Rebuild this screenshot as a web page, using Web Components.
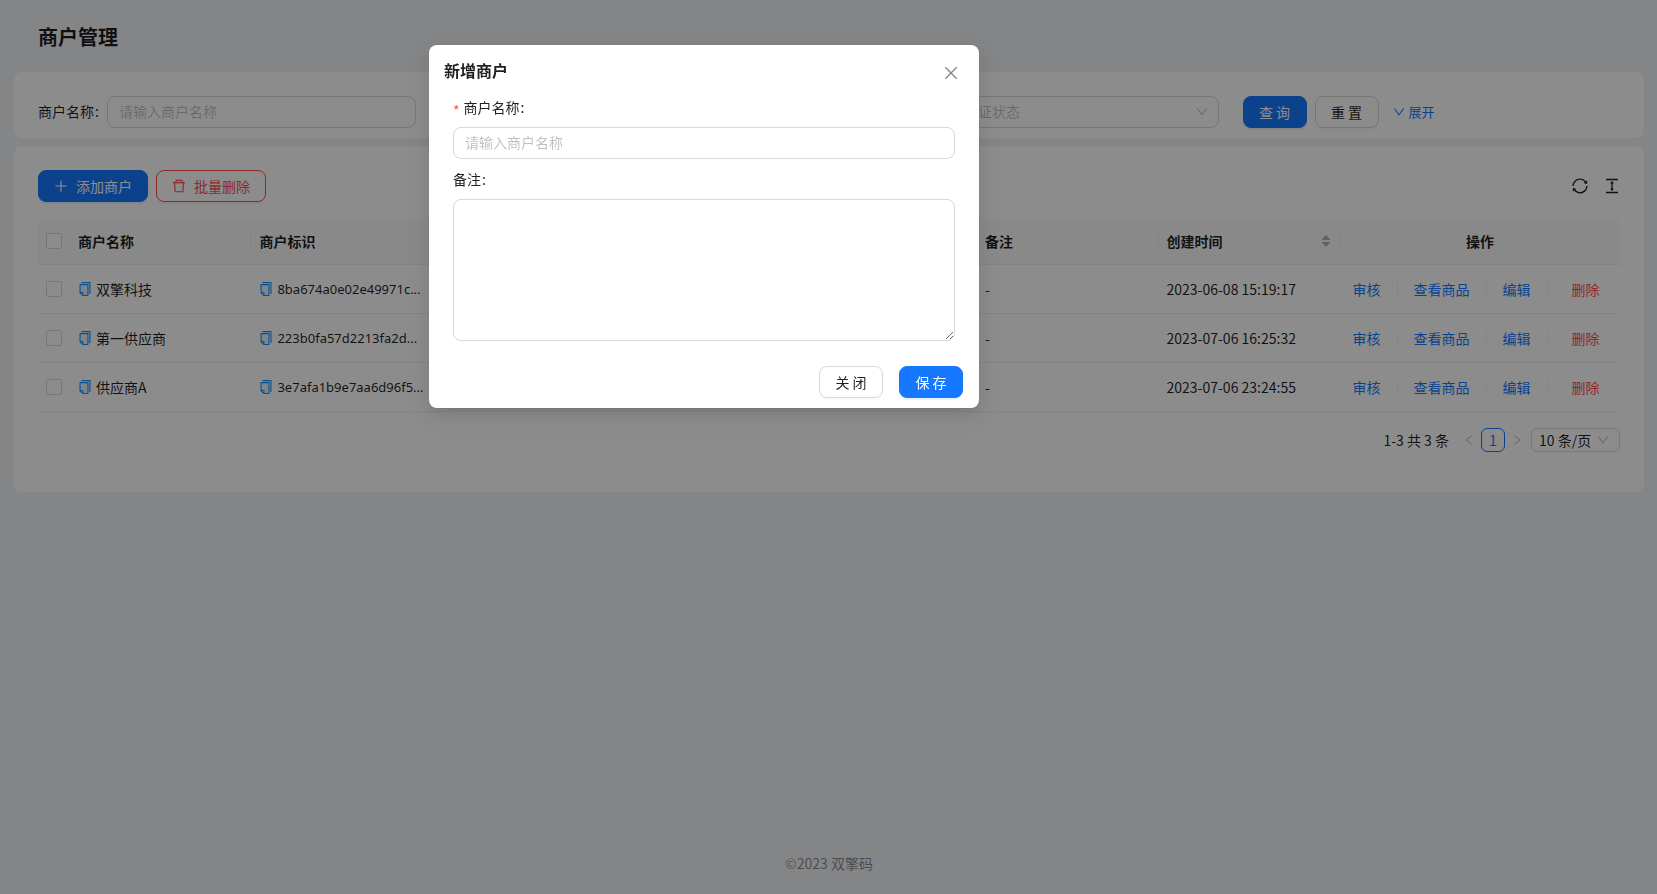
<!DOCTYPE html>
<html lang="zh-CN">
<head>
<meta charset="utf-8">
<title>商户管理</title>
<style>
  body {
    margin: 0;
    font: 14px/22px "Noto Sans CJK SC", sans-serif;
    color: rgba(0, 0, 0, .88);
    background: #f0f2f5;
  }
</style>
</head>
<body>
<merchant-page></merchant-page>

<script>
const ICONS = {
  plus: '<path d="M482 152h60q8 0 8 8v704q0 8-8 8h-60q-8 0-8-8V160q0-8 8-8Z"/><path d="M192 474h672q8 0 8 8v60q0 8-8 8H160q-8 0-8-8v-60q0-8 8-8Z"/>',
  trash: '<path d="M360 184h-8c4.400 0 8-3.600 8-8v8h304v-8c0 4.400 3.600 8 8 8h-8v72h72v-80c0-35.300-28.700-64-64-64H352c-35.300 0-64 28.700-64 64v80h72v-72zm504 72H160c-17.700 0-32 14.300-32 32v32c0 4.400 3.600 8 8 8h60.400l24.700 523c1.600 34.100 29.800 61 63.900 61h454c34.200 0 62.300-26.800 63.900-61l24.700-523H888c4.400 0 8-3.600 8-8v-32c0-17.700-14.300-32-32-32zM731.300 840H292.700l-24.200-512h487l-24.200 512z"/>',
  down: '<path d="M884 256h-75c-5.100 0-9.900 2.500-12.900 6.600L512 654.200 227.900 262.600c-3-4.100-7.800-6.600-12.900-6.600h-75c-6.500 0-10.300 7.400-6.500 12.700l352.600 486.100c12.800 17.600 39 17.600 51.700 0l352.600-486.100c3.900-5.300.1-12.700-6.400-12.700z"/>',
  left: '<path d="M724 218.300V141c0-6.700-7.700-10.400-12.900-6.300L260.300 486.800a31.860 31.860 0 000 50.300l450.800 352.100c5.300 4.100 12.900.4 12.900-6.300v-77.300c0-4.900-2.300-9.600-6.100-12.600l-360-281 360-281.100c3.800-3 6.100-7.700 6.100-12.600z"/>',
  right: '<path d="M765.700 486.800L314.900 134.700A7.970 7.970 0 00302 141v77.300c0 4.900 2.300 9.600 6.100 12.600l360 281.100-360 281.100c-3.900 3-6.100 7.700-6.100 12.600V883c0 6.700 7.700 10.400 12.900 6.300l450.800-352.100a31.960 31.960 0 000-50.400z"/>',
  reload: '<path d="M168 504.200c1-43.700 10-86.100 26.900-126 17.300-41 42.100-77.700 73.700-109.400S337 212.300 378 195c42.400-17.900 87.400-27 133.900-27s91.500 9.100 133.800 27A341.500 341.500 0 01755 268.800c9.900 9.900 19.200 20.400 27.800 31.400l-60.200 47a8 8 0 003 14.100l175.700 43c5 1.200 9.900-2.600 9.900-7.700l.8-180.900c0-6.700-7.700-10.500-12.900-6.300l-56.400 44.100C765.800 155.100 646.200 92 511.800 92 282.700 92 96.300 275.600 92 503.800a8 8 0 008 8.200h60c4.400 0 7.900-3.500 8-7.800zm756 7.800h-60c-4.400 0-7.900 3.500-8 7.800-1 43.700-10 86.100-26.900 126-17.300 41-42.100 77.800-73.700 109.400A342.450 342.450 0 01512.100 856a342.240 342.240 0 01-243.200-100.800c-9.900-9.900-19.200-20.400-27.800-31.400l60.200-47a8 8 0 00-3-14.100l-175.700-43c-5-1.200-9.900 2.600-9.900 7.700l-.7 181c0 6.700 7.700 10.500 12.900 6.300l56.400-44.100C258.200 868.900 377.800 932 512.200 932c229.200 0 415.500-183.700 419.800-411.800a8 8 0 00-8-8.200z"/>',
  height: '<path d="M840 836H184c-4.400 0-8 3.600-8 8v60c0 4.400 3.600 8 8 8h656c4.400 0 8-3.600 8-8v-60c0-4.400-3.600-8-8-8zm0-724H184c-4.400 0-8 3.600-8 8v60c0 4.400 3.600 8 8 8h656c4.400 0 8-3.600 8-8v-60c0-4.400-3.600-8-8-8zM610.800 378c6 0 9.400-7 5.700-11.700L515.700 238.700a7.140 7.140 0 00-11.300 0L403.600 366.300a7.230 7.230 0 005.700 11.700H476v268h-62.800c-6 0-9.400 7-5.700 11.700l100.800 127.500c2.900 3.700 8.500 3.700 11.300 0l100.800-127.500c3.700-4.700.4-11.700-5.700-11.700H548V378h62.800z"/>',
  close: '<path d="M799.860 166.310c.02 0 .04.02.08.06l57.690 57.700c.04.03.05.05.06.08a.12.12 0 010 .06c0 .03-.02.05-.06.09L569.930 512l287.700 287.700c.04.04.05.06.06.09a.12.12 0 010 .07c0 .02-.02.04-.06.08l-57.700 57.690c-.03.04-.05.05-.07.06a.12.12 0 01-.07 0c-.03 0-.05-.02-.09-.06L512 569.930l-287.700 287.700c-.04.04-.06.05-.09.06a.12.12 0 01-.07 0c-.02 0-.04-.02-.08-.06l-57.690-57.700c-.04-.03-.05-.05-.06-.07a.12.12 0 010-.07c0-.03.02-.05.06-.09L454.070 512l-287.700-287.700c-.04-.04-.05-.06-.06-.09a.12.12 0 010-.07c0-.02.02-.04.06-.08l57.700-57.690c.03-.04.05-.05.07-.06a.12.12 0 01.07 0c.03 0 .05.02.09.06L512 454.070l287.700-287.700c.04-.04.06-.05.09-.06a.12.12 0 01.07 0z"/>',
  copy: '<path fill="#e6f4ff" d="M232 706h142c22.100 0 40 17.900 40 40v142h250V264H232v442z"/><path d="M832 64H296c-4.400 0-8 3.600-8 8v56c0 4.400 3.600 8 8 8h496v688c0 4.400 3.600 8 8 8h56c4.400 0 8-3.600 8-8V96c0-17.700-14.300-32-32-32z"/><path d="M704 192H192c-17.700 0-32 14.300-32 32v530.700c0 8.500 3.400 16.600 9.400 22.600l173.300 173.300c2.200 2.200 4.700 4 7.400 5.500v1.900h4.200c3.500 1.300 7.200 2 11 2H704c17.700 0 32-14.300 32-32V224c0-17.700-14.300-32-32-32zM350 856.200L263.900 770H350v86.200zM664 888H414V746c0-22.100-17.900-40-40-40H232V264h432v624z"/>',
  sorter: '<path d="M512 64 176 437h672z"/><path d="M512 960 176 587h672z"/>'
};

class UiIcon extends HTMLElement {
  constructor() {
    super();
    this.attachShadow({ mode: 'open' });
  }
  connectedCallback() {
    this.shadowRoot.innerHTML = `
      <style>
        :host { display: inline-flex; flex: none; width: 14px; height: 14px; }
        svg { width: 100%; height: 100%; fill: currentColor; }
      </style>
      <svg viewBox="64 64 896 896" aria-hidden="true">${ICONS[this.getAttribute('name')]}</svg>`;
  }
}
customElements.define('ui-icon', UiIcon);

class UiButton extends HTMLElement {
  constructor() {
    super();
    this.attachShadow({ mode: 'open' }).innerHTML = `
      <style>
        :host { display: inline-flex; }
        button {
          display: inline-flex; align-items: center; justify-content: center; gap: 8px;
          box-sizing: border-box; height: 32px; min-width: 64px; padding: 0 15px;
          font: inherit; color: inherit; white-space: nowrap; cursor: pointer;
          background: #fff; border: 1px solid #d9d9d9; border-radius: 8px;
          box-shadow: 0 2px 0 rgba(0, 0, 0, .02);
        }
        :host([kind="primary"]) button {
          color: #fff; background: #1677ff; border-color: #1677ff;
          box-shadow: 0 2px 0 rgba(5, 145, 255, .1);
        }
        :host([kind="danger"]) button {
          color: #ff4d4f; border-color: #ff4d4f;
          box-shadow: 0 2px 0 rgba(255, 38, 5, .06);
        }
      </style>
      <button type="button"><slot></slot></button>`;
  }
}
customElements.define('ui-button', UiButton);

class PageCard extends HTMLElement {
  constructor() {
    super();
    this.attachShadow({ mode: 'open' }).innerHTML = `
      <style>
        :host { display: block; padding: 24px; background: #fff; border-radius: 8px; }
      </style>
      <slot></slot>`;
  }
}
customElements.define('page-card', PageCard);

class QueryFilter extends HTMLElement {
  constructor() {
    super();
    this.attachShadow({ mode: 'open' }).innerHTML = `
      <style>
        :host { display: block; }
        form { display: grid; grid-template-columns: repeat(4, minmax(0, 1fr)); column-gap: 24px; }
        .field, .actions { display: flex; align-items: center; gap: 8px; height: 32px; }
        label { white-space: nowrap; padding-bottom: 2px; }
        label::after { content: ":"; margin-left: 1px; }
        .box { position: relative; display: flex; flex: 1; min-width: 0; }
        input, select {
          flex: 1; min-width: 0; box-sizing: border-box; height: 32px; padding: 0 11px 2px;
          font: inherit; background: #fff; border: 1px solid #d9d9d9; border-radius: 8px;
          appearance: none; outline: none;
        }
        select, input::placeholder { color: rgba(0, 0, 0, .25); opacity: 1; }
        .box ui-icon {
          position: absolute; right: 11px; top: 10px; width: 12px; height: 12px;
          color: rgba(0, 0, 0, .25); pointer-events: none;
        }
        a {
          display: inline-flex; align-items: center; gap: 4px; margin-left: 6px;
          color: #1677ff; text-decoration: none; font-size: 13px;
        }
        a ui-icon { width: 12px; height: 12px; }
      </style>
      <form>
        <div class="field"><label for="name">商户名称</label><div class="box"><input id="name" placeholder="请输入商户名称"></div></div>
        <div class="field"><div class="box"><input aria-label="商户标识"></div></div>
        <div class="field"><label for="state">认证状态</label><div class="box">
          <select id="state"><option>请选择认证状态</option></select><ui-icon name="down"></ui-icon></div></div>
        <div class="actions">
          <ui-button kind="primary">查 询</ui-button>
          <ui-button>重 置</ui-button>
          <a href="#"><ui-icon name="down"></ui-icon>展开</a>
        </div>
      </form>`;
  }
}
customElements.define('query-filter', QueryFilter);

class TableToolbar extends HTMLElement {
  constructor() {
    super();
    this.attachShadow({ mode: 'open' }).innerHTML = `
      <style>
        :host { display: flex; align-items: center; gap: 8px; margin-bottom: 16px; }
        .tools { display: flex; gap: 16px; margin-left: auto; }
        .tools button { display: flex; padding: 0; border: 0; background: none; color: inherit; cursor: pointer; }
        .tools ui-icon { width: 16px; height: 16px; }
      </style>
      <ui-button kind="primary"><ui-icon name="plus"></ui-icon>添加商户</ui-button>
      <ui-button kind="danger"><ui-icon name="trash"></ui-icon>批量删除</ui-button>
      <div class="tools">
        <button type="button" aria-label="刷新"><ui-icon name="reload"></ui-icon></button>
        <button type="button" aria-label="密度"><ui-icon name="height"></ui-icon></button>
      </div>`;
  }
}
customElements.define('table-toolbar', TableToolbar);

const MERCHANTS = [
  { name: '双擎科技', code: '8ba674a0e02e49971c...', created: '2023-06-08 15:19:17' },
  { name: '第一供应商', code: '223b0fa57d2213fa2d...', created: '2023-07-06 16:25:32' },
  { name: '供应商A', code: '3e7afa1b9e7aa6d96f5...', created: '2023-07-06 23:24:55' }
];

class MerchantTable extends HTMLElement {
  constructor() {
    super();
    this.attachShadow({ mode: 'open' });
  }
  connectedCallback() {
    const rows = MERCHANTS.map(m => `
      <tr>
        <td class="check"><input type="checkbox" aria-label="选择${m.name}"></td>
        <td><span class="copy"><ui-icon name="copy"></ui-icon>${m.name}</span></td>
        <td><span class="copy code"><ui-icon name="copy"></ui-icon>${m.code}</span></td>
        <td></td><td></td><td></td><td>-</td>
        <td>${m.created}</td>
        <td><div class="ops">
          <a href="#">审核</a><i></i><a href="#">查看商品</a><i></i><a href="#">编辑</a><i></i><a class="del" href="#">删除</a>
        </div></td>
      </tr>`).join('');
    this.shadowRoot.innerHTML = `
      <style>
        :host { display: block; }
        table { width: 100%; table-layout: fixed; border-collapse: separate; border-spacing: 0; }
        th, td {
          box-sizing: border-box; height: 49px; padding: 0 8px; text-align: left;
          white-space: nowrap; border-bottom: 1px solid #f0f0f0;
        }
        th { position: relative; height: 47px; font-weight: 600; background: #fafafa; }
        th:not(.check), td:not(.check) { padding-bottom: 1px; }
        th:first-child { border-top-left-radius: 8px; }
        th:last-child { border-top-right-radius: 8px; text-align: center; }
        th.line::after {
          content: ""; position: absolute; right: 0; top: 12px; width: 1px; height: 22px; background: #f0f0f0;
        }
        .check { width: 32px; }
        .ops-col { width: 280px; }
        .sort { display: flex; align-items: center; justify-content: space-between; }
        .sort ui-icon { width: 12px; height: 12px; color: rgba(0, 0, 0, .29); }
        input {
          display: block; appearance: none; box-sizing: border-box; width: 16px; height: 16px; margin: 0;
          background: #fff; border: 1px solid #d9d9d9; border-radius: 2px;
        }
        .copy { display: flex; align-items: center; gap: 4px; }
        .code { font-family: "Noto Sans", sans-serif; font-size: 13px; }
        .copy ui-icon { color: #1890ff; }
        .ops { display: flex; align-items: center; justify-content: center; gap: 16px; }
        .ops i { width: 1px; height: 13px; background: rgba(5, 5, 5, .06); }
        a { color: #1677ff; text-decoration: none; }
        a.del { padding: 0 8px; color: #ff4d4f; }
      </style>
      <table>
        <thead><tr>
          <th class="check"><input type="checkbox" aria-label="全选"></th>
          <th class="line">商户名称</th>
          <th class="line">商户标识</th>
          <th class="line"></th>
          <th class="line"></th>
          <th class="line"></th>
          <th class="line">备注</th>
          <th class="line"><div class="sort">创建时间<ui-icon name="sorter"></ui-icon></div></th>
          <th class="ops-col">操作</th>
        </tr></thead>
        <tbody>${rows}</tbody>
      </table>`;
  }
}
customElements.define('merchant-table', MerchantTable);

class TablePager extends HTMLElement {
  constructor() {
    super();
    this.attachShadow({ mode: 'open' }).innerHTML = `
      <style>
        :host { display: flex; align-items: center; justify-content: flex-end; margin: 16px 0; height: 24px; }
        .total { margin-right: 8px; }
        button {
          display: flex; align-items: center; justify-content: center; box-sizing: border-box;
          width: 24px; height: 24px; padding: 0; font: inherit; background: none;
          border: 0; color: rgba(0, 0, 0, .25);
        }
        button ui-icon { width: 12px; height: 12px; }
        .current { background: #fff; border: 1px solid #1677ff; border-radius: 6px; color: #1677ff; }
        .size { position: relative; display: flex; margin-left: 2px; }
        select {
          box-sizing: border-box; width: 89px; height: 24px; padding: 0 7px; font: inherit; color: inherit;
          background: #fff; border: 1px solid #d9d9d9; border-radius: 6px; appearance: none;
        }
        .size ui-icon {
          position: absolute; right: 11px; top: 6px; width: 12px; height: 12px;
          color: rgba(0, 0, 0, .25); pointer-events: none;
        }
      </style>
      <span class="total">1-3 共 3 条</span>
      <button type="button" aria-label="上一页"><ui-icon name="left"></ui-icon></button>
      <button type="button" class="current">1</button>
      <button type="button" aria-label="下一页"><ui-icon name="right"></ui-icon></button>
      <div class="size"><select aria-label="每页条数"><option>10 条/页</option></select><ui-icon name="down"></ui-icon></div>`;
  }
}
customElements.define('table-pager', TablePager);

class MerchantDialog extends HTMLElement {
  constructor() {
    super();
    this.attachShadow({ mode: 'open' }).innerHTML = `
      <style>
        :host { position: fixed; inset: 0; z-index: 10; display: block; background: rgba(0, 0, 0, .45); }
        section {
          position: absolute; left: 429px; top: 45px; box-sizing: border-box; width: 550px; max-width: 100%;
          padding: 13px 16px 10px 15px; background: #fff; border-radius: 8px;
          box-shadow: 0 6px 16px 0 rgba(0, 0, 0, .08), 0 3px 6px -4px rgba(0, 0, 0, .12), 0 9px 28px 8px rgba(0, 0, 0, .05);
        }
        header { display: flex; align-items: flex-start; justify-content: space-between; height: 26px; }
        h2 { margin: 0; font-size: 16px; line-height: 24px; font-weight: 600; }
        .close { display: flex; margin: 7px 4px 0 0; padding: 0; border: 0; background: none; color: rgba(0, 0, 0, .45); cursor: pointer; }
        .close ui-icon { width: 16px; height: 16px; }
        form { display: flex; flex-direction: column; padding: 12px 8px 0 9px; }
        label { display: flex; height: 22px; margin-bottom: 9px; }
        label::after { content: ":"; margin-left: 1px; }
        .required::before { content: "*"; margin-right: 4px; padding-top: 3px; color: #ff4d4f; }
        input, textarea {
          display: block; box-sizing: border-box; width: 100%; padding: 0 11px 2px; font: inherit;
          background: #fff; border: 1px solid #d9d9d9; border-radius: 8px; outline: none;
        }
        input { height: 32px; margin-bottom: 9px; }
        input::placeholder { color: rgba(0, 0, 0, .25); opacity: 1; }
        textarea { height: 142px; resize: vertical; }
        footer { display: flex; justify-content: flex-end; gap: 16px; margin-top: 25px; }
      </style>
      <section role="dialog" aria-modal="true" aria-labelledby="title">
        <header>
          <h2 id="title">新增商户</h2>
          <button class="close" type="button" aria-label="关闭"><ui-icon name="close"></ui-icon></button>
        </header>
        <form>
          <label class="required" for="merchant">商户名称</label>
          <input id="merchant" placeholder="请输入商户名称">
          <label for="remark">备注</label>
          <textarea id="remark"></textarea>
        </form>
        <footer>
          <ui-button>关 闭</ui-button>
          <ui-button kind="primary">保 存</ui-button>
        </footer>
      </section>`;
  }
}
customElements.define('merchant-dialog', MerchantDialog);

class MerchantPage extends HTMLElement {
  constructor() {
    super();
    this.attachShadow({ mode: 'open' }).innerHTML = `
      <style>
        :host { display: flex; flex-direction: column; box-sizing: border-box; min-height: 100vh; padding: 0 13px 0 14px; }
        h1 { margin: 0; padding: 21px 24px 19px; font-size: 20px; line-height: 32px; font-weight: 600; }
        main { display: flex; flex-direction: column; gap: 8px; }
        .filter { padding-bottom: 10px; }
        footer { margin-top: auto; padding: 20px 0; text-align: center; color: rgba(0, 0, 0, .45); }
      </style>
      <h1>商户管理</h1>
      <main>
        <page-card class="filter"><query-filter></query-filter></page-card>
        <page-card>
          <table-toolbar></table-toolbar>
          <merchant-table></merchant-table>
          <table-pager></table-pager>
        </page-card>
      </main>
      <footer>©2023 双擎码</footer>
      <merchant-dialog></merchant-dialog>`;
  }
}
customElements.define('merchant-page', MerchantPage);
</script>
</body>
</html>
